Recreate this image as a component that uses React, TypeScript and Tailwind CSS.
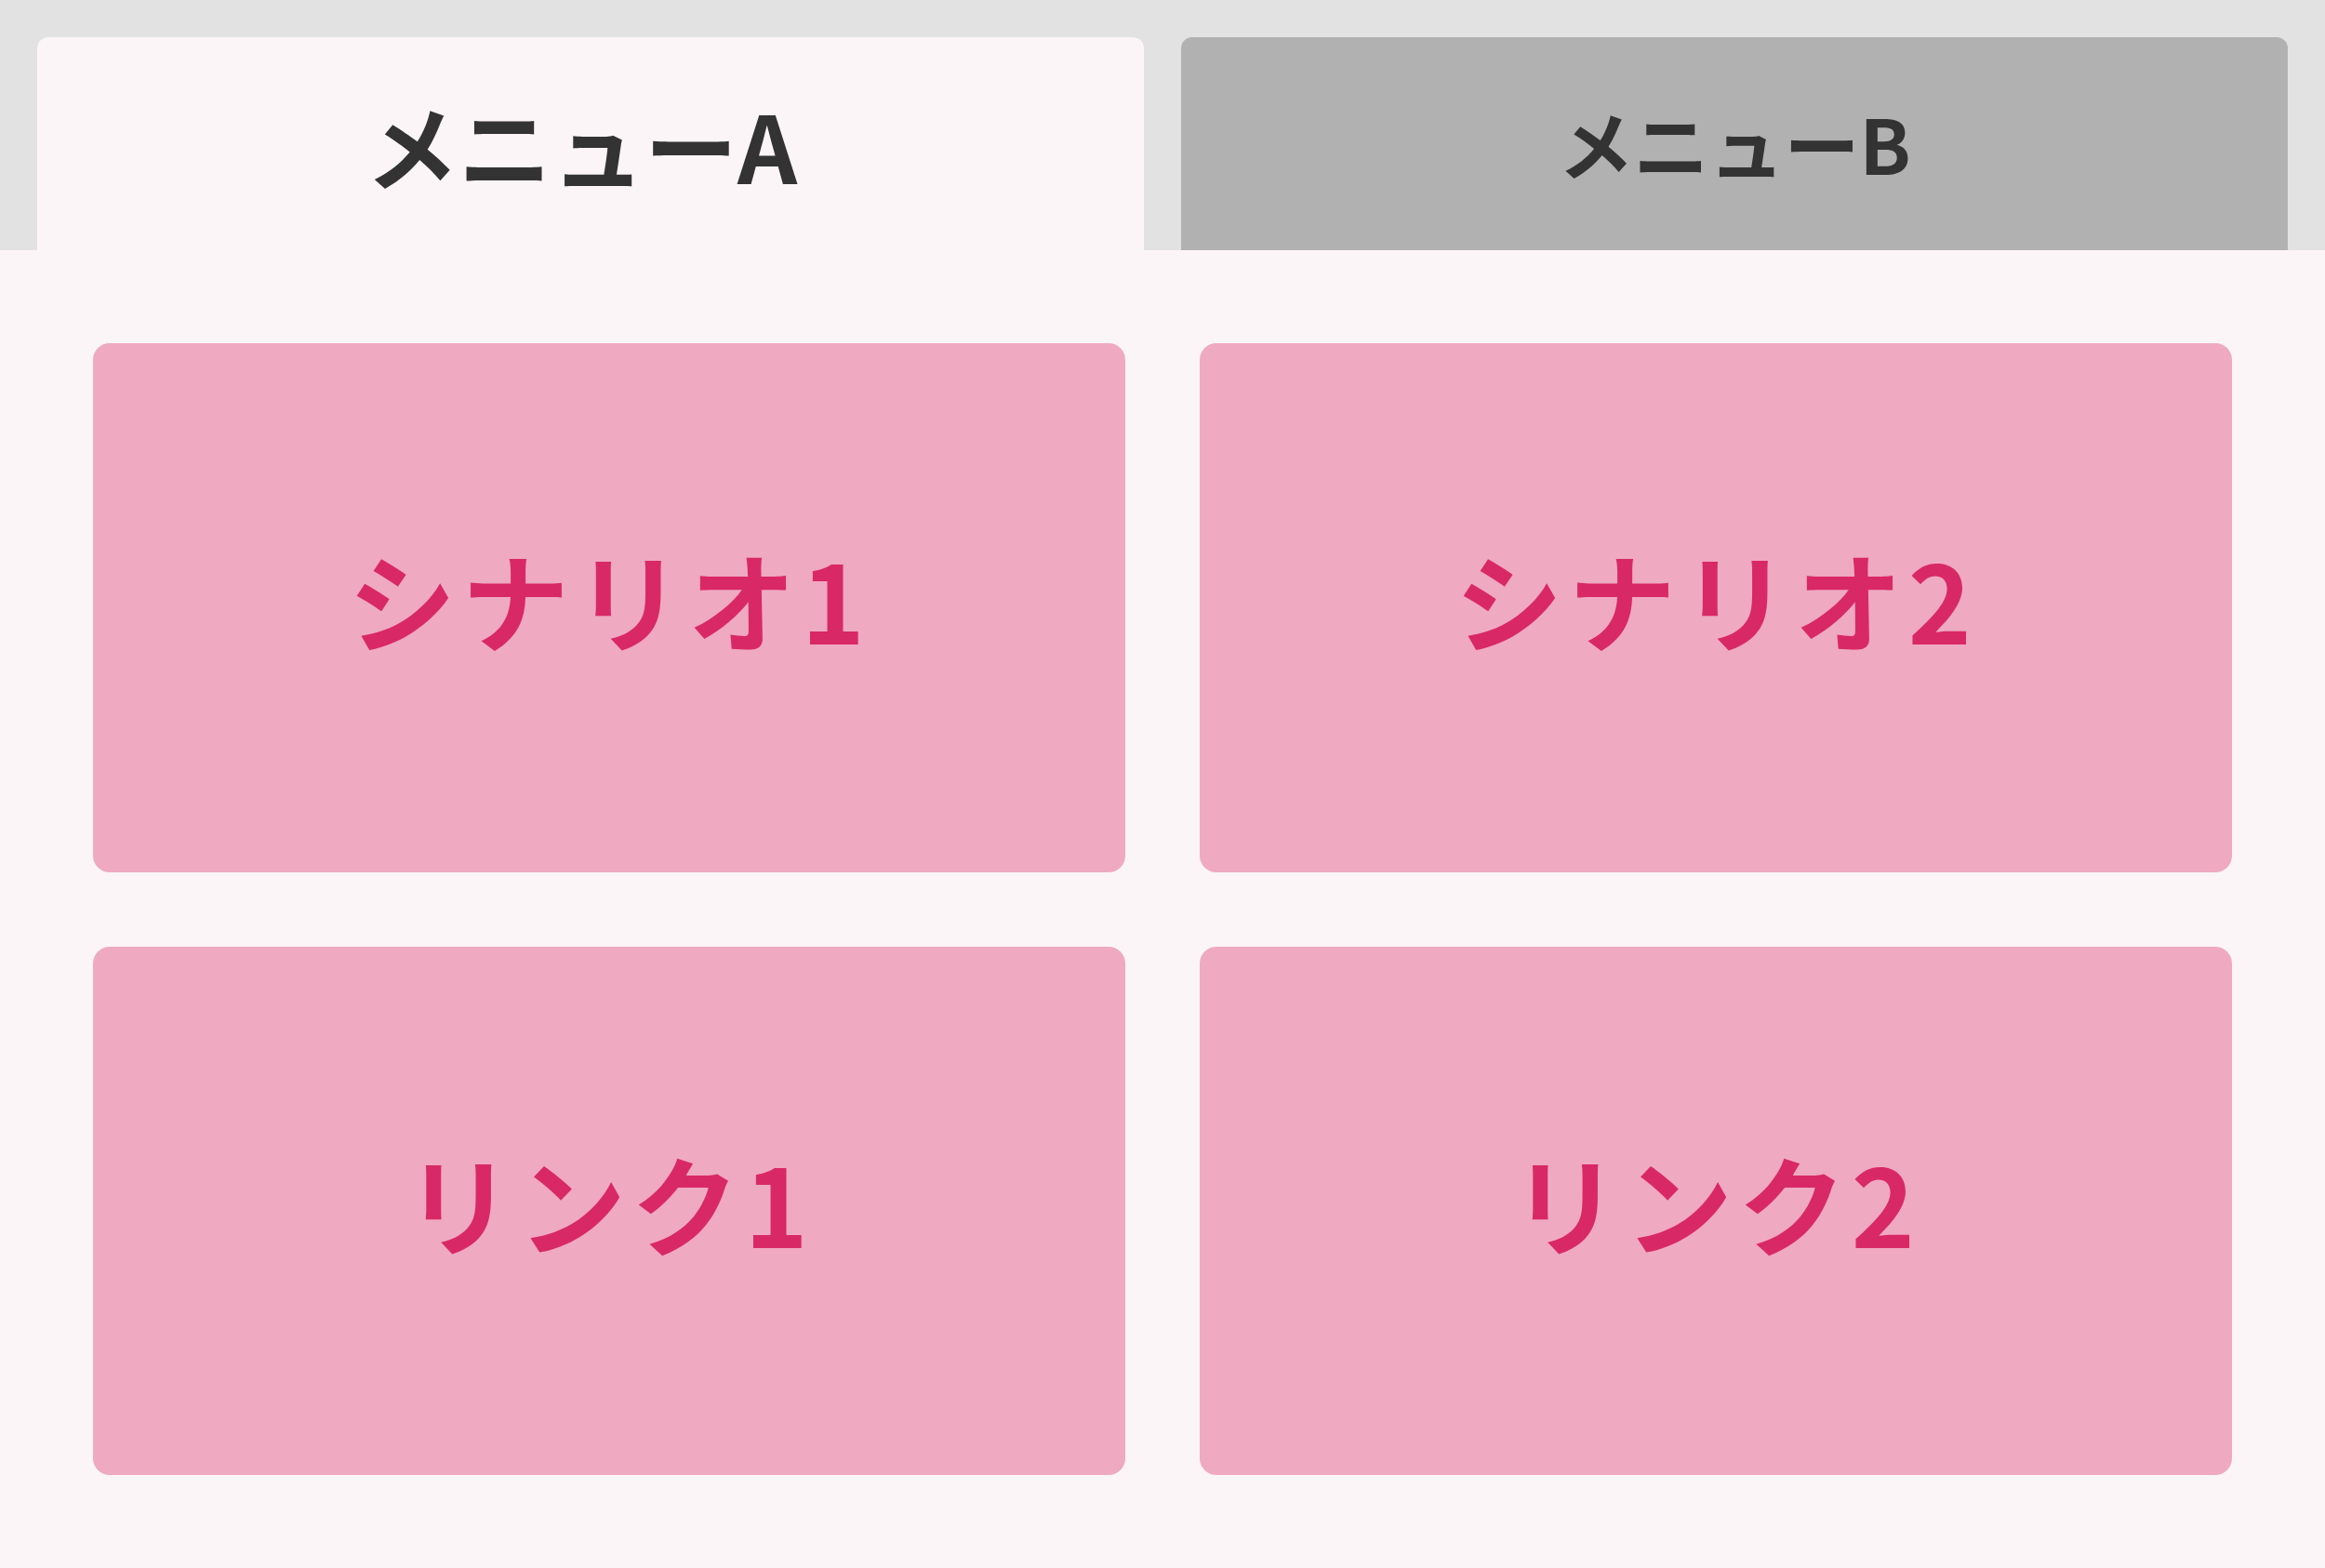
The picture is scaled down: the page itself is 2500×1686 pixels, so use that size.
import { useState } from 'react';

type Tab = 'A' | 'B';

const CARDS: Record<Tab, string[]> = {
  A: ['シナリオ1', 'シナリオ2', 'リンク1', 'リンク2'],
  B: ['シナリオ3', 'シナリオ4', 'リンク3', 'リンク4'],
};

export default function App() {
  const [tab, setTab] = useState<Tab>('A');

  return (
    <div
      className="flex h-[1686px] w-[2500px] flex-col bg-[#fbf5f7]"
      style={{ fontFamily: '"Noto Sans CJK JP", "Noto Sans", sans-serif' }}
    >
      {/* tab bar */}
      <div className="grid h-[269px] shrink-0 grid-cols-2 items-end gap-10 bg-[#e2e2e2] px-10">
        {(['A', 'B'] as Tab[]).map((t) => {
          const active = tab === t;
          return (
            <button
              key={t}
              onClick={() => setTab(t)}
              className={
                active
                  ? 'flex h-[229px] items-center justify-center rounded-t-[12px] bg-[#fbf5f7] pr-5 text-[100px] font-bold text-[#333333]'
                  : 'flex h-[229px] items-center justify-center rounded-t-[12px] bg-[#b1b1b1] pb-1 text-[81px] font-bold text-[#333333]'
              }
            >
              メニュー{t}
            </button>
          );
        })}
      </div>

      {/* card grid */}
      <div className="grid flex-1 grid-cols-2 grid-rows-2 gap-x-20 gap-y-20 p-[100px]">
        {CARDS[tab].map((label) => (
          <a
            key={label}
            href="#"
            className="flex items-center justify-center rounded-[18px] bg-[#efa9c1] pb-[22px] text-[116px] font-bold tracking-[0.05em] text-[#d92866]"
          >
            {label}
          </a>
        ))}
      </div>
    </div>
  );
}
